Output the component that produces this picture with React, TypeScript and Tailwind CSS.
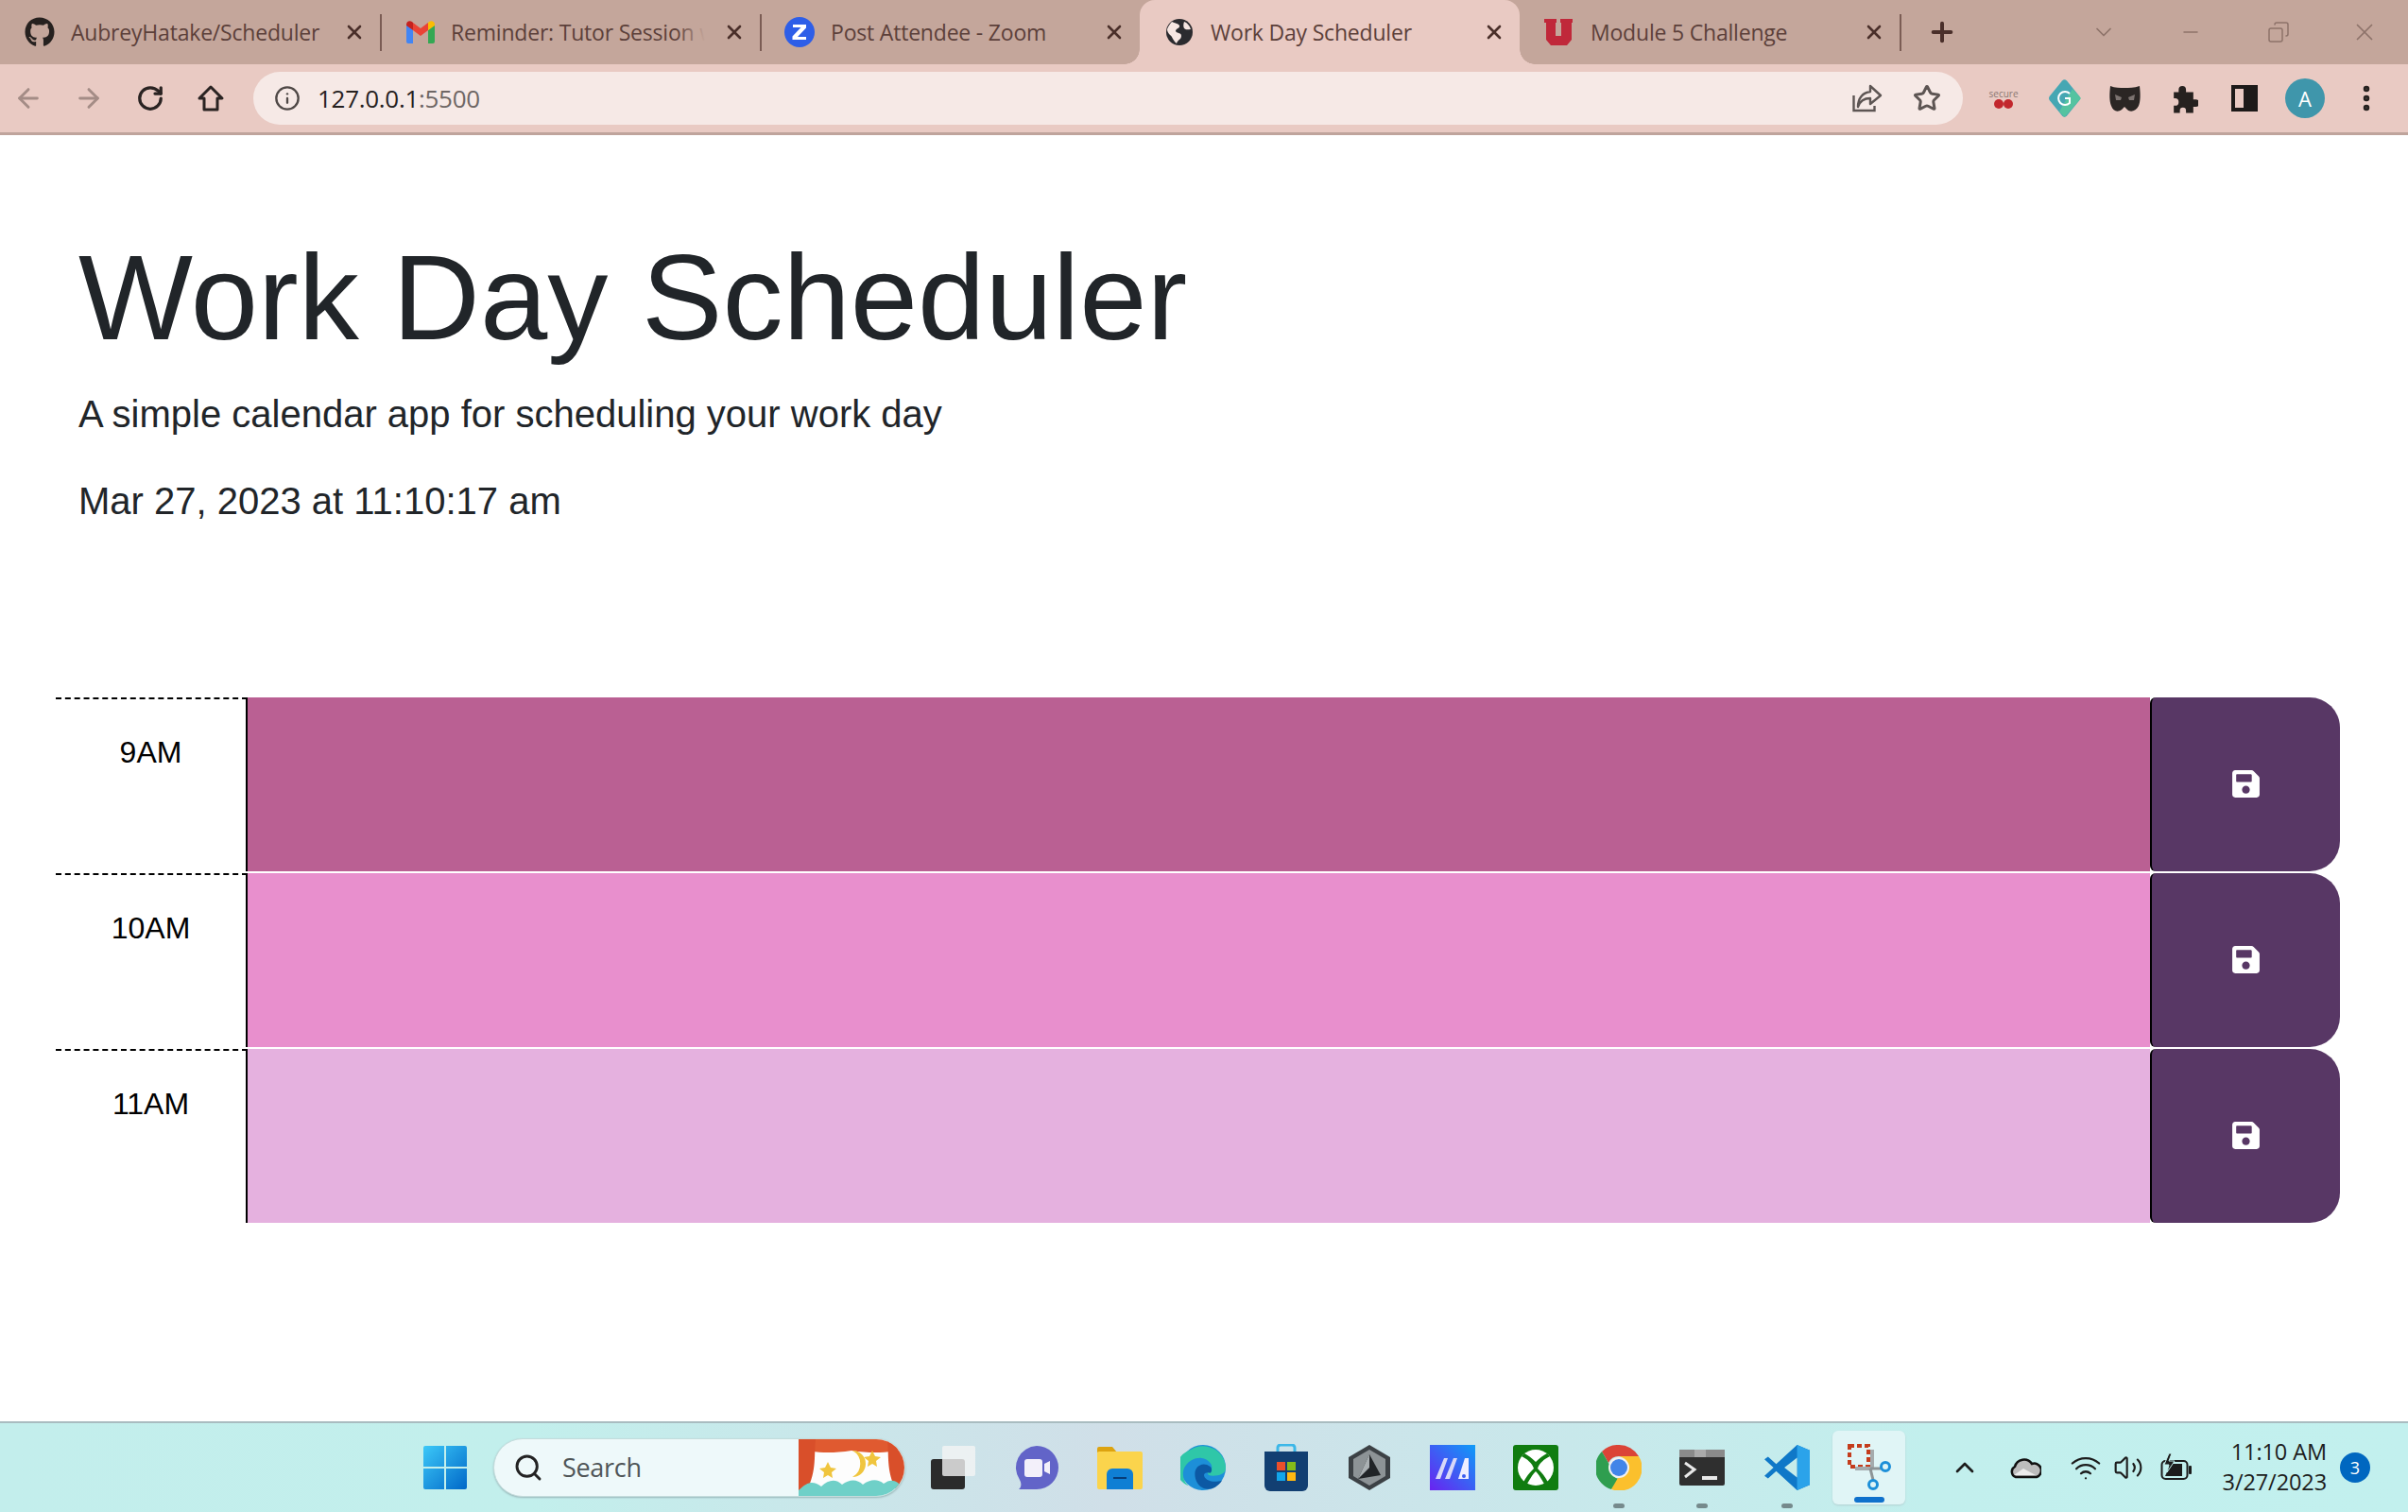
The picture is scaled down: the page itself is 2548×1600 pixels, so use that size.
import { FaGithub, FaSave } from 'react-icons/fa';
import { ArrowLeft, ArrowRight, ChevronDown, Copy, Info, MoreVertical, Plus, RotateCw, Search, Star, Volume2, Wifi, X, Minus, ChevronUp } from 'lucide-react';
import type { ReactNode } from 'react';

const sans = 'font-["Open_Sans","Noto_Sans",sans-serif]';

function GmailIcon() {
  return (
    <svg className="ml-[2px]" width="30" height="24" viewBox="0 0 30 24">
      <path d="M0 4v18a2 2 0 0 0 2 2h5V10z" fill="#4285f4" />
      <path d="M30 4v18a2 2 0 0 1-2 2h-5V10z" fill="#34a853" />
      <path d="M7 10 15 16l8-6V2l-8 6-8-6z" fill="#ea4335" />
      <path d="M0 4c0-3 3-5 6-3l1 1v8L0 5z" fill="#c5221f" />
      <path d="M30 4c0-3-3-5-6-3l-1 1v8l7-5z" fill="#fbbc04" />
    </svg>
  );
}

function ZoomIcon() {
  return (
    <svg width="32" height="32" viewBox="0 0 32 32">
      <circle cx="16" cy="16" r="16" fill="#2d5ee8" />
      <path d="M9 8h14v3.5L14 21h9v3H8.500v-3.500L17.500 11H9z" fill="#fff" />
    </svg>
  );
}

function GlobeIcon() {
  return (
    <svg width="30" height="30" viewBox="0 0 30 30">
      <circle cx="15" cy="15" r="14" fill="#2b2b2f" />
      <path d="M7 4c3 2 6 1 8 4 1 3-4 3-4 6 2 3 6 1 6 5s-4 4-5 8c-4-3-4-7-7-9-2-2-3-4-3-6 1-3 3-6 5-8zM20 4c3 1 6 4 7 8-3 0-5 1-7-1-1-2-1-4 0-7z" fill="#f6e6e2" />
    </svg>
  );
}

function UtahIcon() {
  return (
    <svg className="-ml-[2px]" width="30" height="28" viewBox="0 0 30 28">
      <path d="M0 0h13v4h-1v14h6V4h-1V0h13v4h-1v18l-5 6H7l-5-6V4H0z" fill="#c0283a" />
    </svg>
  );
}

function Tab({ icon, title, active, fade, divider = true }: { icon: ReactNode; title: string; active?: boolean; fade?: boolean; divider?: boolean }) {
  return (
    <div className={`relative flex h-[68px] w-[402px] items-center pl-[26px] ${active ? 'rounded-t-[16px] bg-[#e9cac3]' : ''}`}>
      {active && <span className="absolute bottom-0 left-[-16px] h-4 w-4 bg-[radial-gradient(circle_at_0_0,#c4a69b_15.500px,#e9cac3_16px)]" />}
      {active && <span className="absolute bottom-0 right-[-16px] h-4 w-4 bg-[radial-gradient(circle_at_100%_0,#c4a69b_15.500px,#e9cac3_16px)]" />}
      <span className="flex w-[32px] shrink-0 justify-center">{icon}</span>
      <span className="relative ml-[17px] w-[269px] overflow-hidden whitespace-nowrap text-[23px] leading-[30px] tracking-[-0.2px] text-[#5c403a]">
        {title}
        {fade && <span className="absolute inset-y-0 right-0 w-[30px] bg-gradient-to-r from-transparent to-[#c4a69b]" />}
      </span>
      <X className="absolute right-[15px] text-[#4a2f2a]" size={24} strokeWidth={2.6} />
      {divider && !active && <span className="absolute right-[-2px] top-[15px] h-[39px] w-[2px] bg-[#7b5c54]" />}
    </div>
  );
}

function ChromeBar() {
  return (
    <header className={`shrink-0 ${sans}`}>
      <div className="flex h-[68px] items-center bg-[#c4a69b]">
        <Tab icon={<FaGithub size={32} className="text-[#26211f]" />} title="AubreyHatake/Scheduler" />
        <Tab icon={<GmailIcon />} title="Reminder: Tutor Session with Aubrey" fade />
        <Tab icon={<ZoomIcon />} title="Post Attendee - Zoom" divider={false} />
        <Tab icon={<GlobeIcon />} title="Work Day Scheduler" active />
        <Tab icon={<UtahIcon />} title="Module 5 Challenge" />
        <Plus className="ml-[29px] text-[#4a2f2a]" size={32} strokeWidth={3} />
        <ChevronDown className="ml-[141px] text-[#8d736a]" size={28} strokeWidth={1.5} />
        <Minus className="ml-[66px] text-[#8d736a]" size={24} strokeWidth={1.5} />
        <Copy className="ml-[69px] -scale-x-100 text-[#8d736a]" size={24} strokeWidth={1.5} />
        <X className="ml-[64px] text-[#8d736a]" size={30} strokeWidth={1.4} />
      </div>
      <div className="flex h-[72px] items-center bg-[#e9cac3] pl-[14px]">
        <ArrowLeft className="text-[#a48c86]" size={32} strokeWidth={2.2} />
        <ArrowRight className="ml-[32px] text-[#a48c86]" size={32} strokeWidth={2.2} />
        <RotateCw className="ml-[34px] text-[#2a2322]" size={30} strokeWidth={2.6} />
        <svg className="ml-[34px]" width="30" height="30" viewBox="0 0 30 30">
          <path d="M15 3 27 15h-5v12H8V15H3z" fill="none" stroke="#2a2322" strokeWidth="3" strokeLinejoin="round" />
        </svg>
        <div className="ml-[30px] flex h-[56px] w-[1809px] items-center rounded-full bg-[#f6e9e6] pl-[22px]">
          <Info className="text-[#4f4846]" size={28} strokeWidth={2} />
          <span className="ml-[18px] text-[26px] tracking-[-0.3px] text-[#26211f]">
            127.0.0.1<span className="text-[#6e6664]">:5500</span>
          </span>
          <svg className="ml-auto" width="32" height="30" viewBox="0 0 32 30">
            <path d="M1.500 12v16h22v-5" fill="none" stroke="#5d5553" strokeWidth="2.400" />
            <path d="M19 2 30 12 19 21v-6c-7 0-11 3-13 9 0-9 5-15 13-16z" fill="none" stroke="#5d5553" strokeWidth="2.400" strokeLinejoin="round" />
          </svg>
          <Star className="ml-[32px] mr-[23px] text-[#5d5553]" size={30} strokeWidth={2.4} />
        </div>
        <div className="ml-[28px] flex w-[30px] flex-col items-center leading-none">
          <span className="text-[10px] text-[#8a7772]">secure</span>
          <span className="mt-[1px] flex">
            <span className="h-[10px] w-[10px] rounded-full bg-[#c2272d]" />
            <span className="h-[10px] w-[10px] rounded-full bg-[#c2272d]" />
          </span>
        </div>
        <svg className="ml-[32px]" width="35" height="40" viewBox="0 0 35 40">
          <path d="M15 1.500a3.500 3.500 0 0 1 5 0l13 16a4 4 0 0 1 0 5l-13 16a3.500 3.500 0 0 1-5 0L2 22.500a4 4 0 0 1 0-5z" fill="#46a7b3" />
          <path d="M17.500 40 35 20 26 10 12 34z" fill="#55c3a0" />
          <path d="M23 15a7 7 0 1 0 0 10v-5h-5" fill="none" stroke="#fff" strokeWidth="2" />
        </svg>
        <svg className="ml-[30px]" width="33" height="30" viewBox="0 0 33 30">
          <path d="M1 2c5 2 10 2 15 2s10 0 16-2c1 9 1 16-1 21-3 6-9 7-12 4l-3-3-3 3c-4 3-9 2-11-4C0 18 0 11 1 2z" fill="#2b2624" />
          <path d="M6 11l7 3-1 3H7zM27 11l-7 3 1 3h5z" fill="#7c7370" />
        </svg>
        <svg className="ml-[30px]" width="31" height="32" viewBox="0 0 24 24">
          <path d="M4 7h4V5a3 3 0 0 1 6 0v2h6v6h2a3 3 0 0 1 0 6h-2v5h-6v-2a2.500 2.500 0 0 0-5 0v2H4v-6h1a3 3 0 0 0 0-6H4z" fill="#26211f" />
        </svg>
        <span className="ml-[35px] flex h-[28px] w-[28px] justify-end border-[4px] border-[#1d1a19]">
          <span className="h-full w-[11px] bg-[#1d1a19]" />
        </span>
        <span className="ml-[29px] flex h-[42px] w-[42px] items-center justify-center rounded-full bg-[#3f96ab] text-[22px] text-white">A</span>
        <MoreVertical className="ml-[27px] text-[#26211f]" size={34} strokeWidth={2.6} />
      </div>
      <div className="h-[3px] bg-[#bfa49c]" />
    </header>
  );
}

function HourRow({ hour, color }: { hour: string; color: string }) {
  return (
    <div className="flex h-[184px]">
      <div className="h-full w-[203px] border-r-2 border-t-2 border-r-black border-t-black border-dashed [border-right-style:solid] pt-[32px] text-center text-[32px] leading-[48px] text-black">
        {hour}
      </div>
      <div className={`h-full flex-1 ${color}`} />
      <button className="flex h-full w-[201px] items-center justify-center rounded-l-[6px] rounded-r-[32px] border-l-2 border-black bg-[#583765] text-white">
        <FaSave size={33} className="-mt-[2px]" />
      </button>
    </div>
  );
}

function TaskIcon({ children, dot, className = '' }: { children: ReactNode; dot?: boolean; className?: string }) {
  return (
    <div className={`relative flex h-[50px] w-[48px] items-center justify-center ${className}`}>
      {children}
      {dot && <span className="absolute bottom-[-18px] h-[5px] w-[12px] rounded-full bg-[#768a8c]" />}
    </div>
  );
}

function Taskbar() {
  return (
    <footer className={`flex h-[96px] shrink-0 items-center border-t-2 border-[#a9bcc0] bg-[linear-gradient(90deg,#c3eeec_0%,#c2efec_22%,#d0dfe8_46%,#c2efed_80%,#c2f0ee_100%)] pl-[448px] ${sans}`}>
      <svg width="46" height="46" viewBox="0 0 46 46">
        <defs>
          <linearGradient id="win" x1="0" y1="0" x2="1" y2="1">
            <stop offset="0" stopColor="#3cc8f8" />
            <stop offset="1" stopColor="#0068c8" />
          </linearGradient>
        </defs>
        <path d="M0 2a2 2 0 0 1 2-2h20v22H0zM24 0h20a2 2 0 0 1 2 2v20H24zM0 24h22v22H2a2 2 0 0 1-2-2zM24 24h22v20a2 2 0 0 1-2 2H24z" fill="url(#win)" />
      </svg>
      <div className="relative ml-[28px] flex h-[62px] w-[436px] items-center overflow-hidden rounded-full border border-[#c4dcdc] bg-[#eef9fa] pl-[20px] shadow-[0_1px_2px_#9ab8ba]">
        <Search className="text-[#232323]" size={32} strokeWidth={2.2} />
        <span className="ml-[20px] text-[27px] tracking-[-0.3px] text-[#4f5557]">Search</span>
        <svg className="absolute right-0 top-0" width="112" height="62" viewBox="0 0 112 62">
          <rect width="112" height="62" fill="#fdfdfd" />
          <path d="M0 0h112v8c-10 6-30 8-56 4C30 16 12 14 0 8z" fill="#e05a30" />
          <path d="M0 0h18c-2 20 2 34-12 60H0zM112 0H94c2 20-2 34 12 60h6z" fill="#d94f2a" />
          <path d="M0 54c10-10 16-10 24-4 8-8 16-8 22-2 8-6 16-6 22 0 8-6 16-6 22-1 8-6 14-4 22 6v9H0z" fill="#6fd0c8" />
          <path d="M57 12a14 14 0 1 1 0 28 16 16 0 0 0 0-28z" fill="#f0c53e" />
          <path d="M31 24l3 6 6 1-5 4 1 6-5-3-5 3 1-6-5-4 6-1zM78 12l3 6 6 1-5 4 1 6-5-3-5 3 1-6-5-4 6-1z" fill="#f0c53e" />
        </svg>
      </div>
      <div className="relative ml-[27px] h-[46px] w-[47px]">
        <span className="absolute bottom-0 left-0 h-[32px] w-[36px] rounded-[3px] bg-[#2b2b2b]" />
        <span className="absolute right-0 top-0 h-[32px] w-[35px] rounded-[2px] bg-[#f4f4f4]/80" />
      </div>
      <TaskIcon className="ml-[41px]">
        <svg width="46" height="46" viewBox="0 0 46 46">
          <path d="M23 0a23 23 0 0 1 0 46H4c3-3 3-6 1-10A23 23 0 0 1 23 0z" fill="#6264c8" />
          <rect x="10" y="14" width="19" height="19" rx="3" fill="#f3f0fa" />
          <path d="M31 19l6-3v14l-6-3z" fill="#f3f0fa" />
        </svg>
      </TaskIcon>
      <TaskIcon className="ml-[40px]">
        <svg width="48" height="46" viewBox="0 0 48 46">
          <path d="M0 3a2 2 0 0 1 2-2h14l5 6H0z" fill="#dda310" />
          <rect y="6" width="48" height="40" rx="2" fill="#fbd44c" />
          <path d="M10 46V30a6 6 0 0 1 6-6h16a6 6 0 0 1 6 6v16z" fill="#0f7fd4" />
          <rect x="17" y="33" width="14" height="2" fill="#073d78" />
        </svg>
      </TaskIcon>
      <TaskIcon className="ml-[40px]">
        <svg width="50" height="50" viewBox="0 0 50 50">
          <circle cx="25" cy="25" r="25" fill="#1d8fd8" />
          <path d="M12 5a25 25 0 0 1 38 20c0 7-7 9-14 9-4 0-6-1-6-3 5-2 6-7 3-11-6-8-20-8-28 4-4 7-2 16 4 21-9-4-13-10-13-20C-4 14 4 8 12 5z" fill="#2fc7a8" />
          <path d="M16 32c0-9 9-14 17-8 2 2 2 5 0 7-2-1-6-1-7 2 0 5 9 10 20 6-5 8-13 11-20 9-6-2-10-9-10-16z" fill="#0c59a4" />
        </svg>
      </TaskIcon>
      <TaskIcon className="ml-[40px]">
        <svg width="46" height="50" viewBox="0 0 46 50">
          <path d="M10 10h4V4a3 3 0 0 1 3-3h12a3 3 0 0 1 3 3v6h4" fill="none" stroke="#3cb7e8" strokeWidth="3" />
          <path d="M0 8h46v36a6 6 0 0 1-6 6H6a6 6 0 0 1-6-6z" fill="#123f72" />
          <rect x="13" y="19" width="9" height="9" fill="#ea4f2b" />
          <rect x="24" y="19" width="9" height="9" fill="#85bb1a" />
          <rect x="13" y="30" width="9" height="9" fill="#12a5ea" />
          <rect x="24" y="30" width="9" height="9" fill="#fdb812" />
        </svg>
      </TaskIcon>
      <TaskIcon className="ml-[40px]">
        <svg width="44" height="48" viewBox="0 0 44 48">
          <path d="M22 0 44 13v22L22 48 0 35V13z" fill="#3c4145" />
          <path d="M22 5 39 15v18L22 43 5 33V15z" fill="#8d9396" />
          <path d="M22 10 34 32 10 36z" fill="#212427" />
          <path d="M10 36 22 24v-14z" fill="#aab0b3" />
        </svg>
      </TaskIcon>
      <TaskIcon className="ml-[40px]">
        <svg width="48" height="48" viewBox="0 0 48 48">
          <defs>
            <linearGradient id="mm" x1="1" y1="0" x2="0" y2="1">
              <stop offset="0" stopColor="#0f9cf8" />
              <stop offset="1" stopColor="#6a22f0" />
            </linearGradient>
          </defs>
          <rect width="48" height="48" fill="url(#mm)" />
          <path d="M6 36 15 14h4l-8 22zM16 36 25 14h4l-8 22z" fill="#d8d8f8" />
          <path d="M30 36 37 14h4v22z" fill="#eef" />
          <circle cx="36" cy="33" r="2" fill="#3a5cf0" />
        </svg>
      </TaskIcon>
      <TaskIcon className="ml-[40px]">
        <svg width="48" height="48" viewBox="0 0 48 48">
          <rect width="48" height="48" rx="3" fill="#107c10" />
          <circle cx="24" cy="24" r="19" fill="#fff" />
          <path d="M24 18c-4-4-8-7-12-9l-3 3c6 3 11 7 13 13-6 6-11 12-12 19l3 1c4-8 8-14 11-17 3 3 7 9 11 17l3-1c-1-7-6-13-12-19 2-6 7-10 13-13l-3-3c-4 2-8 5-12 9z" fill="#107c10" />
        </svg>
      </TaskIcon>
      <TaskIcon className="ml-[40px]" dot>
        <svg width="48" height="48" viewBox="0 0 48 48">
          <path d="M24 0a24 24 0 0 1 21 12H24a12 12 0 0 0-11 7L6 7A24 24 0 0 1 24 0z" fill="#db4437" />
          <path d="M6 7l11 19a8 8 0 0 0 7 10l-8 11A24 24 0 0 1 6 7z" fill="#2f9e4f" />
          <path d="M45 12a24 24 0 0 1-29 35l11-19c3-2 5-4 5-7 0-4-3-8-8-9z" fill="#fbc02d" />
          <circle cx="24" cy="24" r="11" fill="#f2f2f2" />
          <circle cx="24" cy="24" r="9" fill="#4285e8" />
        </svg>
      </TaskIcon>
      <TaskIcon className="ml-[40px]" dot>
        <svg width="48" height="38" viewBox="0 0 48 38">
          <rect width="48" height="38" rx="2" fill="#2f2f2f" />
          <rect y="0" width="48" height="8" fill="#8a8a8a" />
          <rect x="16" y="0" width="12" height="8" fill="#aaa" />
          <path d="M6 14 16 21 6 29" fill="none" stroke="#e8e8e8" strokeWidth="3" />
          <rect x="24" y="28" width="16" height="4" fill="#e8e8e8" />
        </svg>
      </TaskIcon>
      <TaskIcon className="ml-[42px]" dot>
        <svg width="50" height="50" viewBox="0 0 50 50">
          <path d="M36 0 50 6v38l-14 6-23-21-9 8-4-3 10-9L0 16l4-3 9 8z" fill="#0f78c8" />
          <path d="M36 0v50L50 44V6z" fill="#2ba3ea" />
          <path d="M36 14 22 25l14 11z" fill="#c7ecea" />
        </svg>
      </TaskIcon>
      <div className="relative ml-[24px] flex h-[78px] w-[77px] items-center justify-center rounded-[6px] bg-[#e0f5f6] shadow-[0_1px_2px_#b4d0d2]">
        <svg width="46" height="50" viewBox="0 0 46 50">
          <rect x="2" y="2" width="20" height="22" fill="none" stroke="#c43c1c" strokeWidth="4" strokeDasharray="5 3" />
          <path d="M8 26h16a2 2 0 0 0 2-2V6" fill="none" stroke="#a5abad" strokeWidth="4" />
          <path d="M24 26 35 26M24 26 27 38" fill="none" stroke="#8d9496" strokeWidth="3" />
          <circle cx="40" cy="24" r="4.500" fill="none" stroke="#1c8fd8" strokeWidth="3" />
          <circle cx="27" cy="43" r="4.500" fill="none" stroke="#1c8fd8" strokeWidth="3" />
        </svg>
        <span className="absolute bottom-[2px] h-[6px] w-[32px] rounded-full bg-[#0f71cc]" />
      </div>
      <ChevronUp className="ml-[47px] text-[#1c1c1c]" size={32} strokeWidth={2} />
      <svg className="ml-[31px]" width="34" height="24" viewBox="0 0 34 24">
        <path d="M7 22a6 6 0 0 1-1-11 10 10 0 0 1 18-3 7 7 0 0 1 5 14z" fill="#bcbcbc" stroke="#111" strokeWidth="2.500" />
        <path d="M5 20l10-7 13 7z" fill="#ececec" />
      </svg>
      <Wifi className="ml-[30px] text-[#1c1c1c]" size={34} strokeWidth={1.6} />
      <Volume2 className="ml-[12px] text-[#1c1c1c]" size={32} strokeWidth={1.6} />
      <svg className="ml-[18px]" width="34" height="30" viewBox="0 0 34 30">
        <rect x="1.500" y="8" width="27" height="19" rx="4" fill="none" stroke="#1c1c1c" strokeWidth="2" />
        <rect x="30" y="13" width="3" height="9" rx="1" fill="#1c1c1c" />
        <path d="M5 24 11 11h12v13z" fill="#1c1c1c" />
        <path d="M9 0 4 12h5l-2 8 8-12H9l3-8z" fill="#1c1c1c" stroke="#c2efec" strokeWidth="1" />
      </svg>
      <div className="ml-[18px] w-[124px] text-right text-[23.500px] leading-[32px] text-[#1c1c1c]">
        <div className="-mt-[2px] tracking-[-0.1px]">11:10 AM</div>
        <div className="tracking-[-0.1px]">3/27/2023</div>
      </div>
      <span className="ml-[14px] flex h-[32px] w-[32px] items-center justify-center rounded-full bg-[#0067c0] text-[18px] text-white">3</span>
    </footer>
  );
}

export default function App() {
  return (
    <div className="flex h-[1600px] w-[2548px] flex-col overflow-hidden bg-white font-['Liberation_Sans',Arial,sans-serif]">
      <ChromeBar />
      <main className="flex-1">
        <div className="pl-[83px] pt-[95px] text-[#212529]">
          <h1 className="text-[128.200px] leading-[154px]">Work Day Scheduler</h1>
          <p className="mt-[16px] text-[40px] leading-[60px]">A simple calendar app for scheduling your work day</p>
          <p className="mt-[32px] text-[40px] leading-[60px]">Mar 27, 2023 at 11:10:17 am</p>
        </div>
        <div className="ml-[59px] mt-[178px] flex w-[2417px] flex-col gap-[2px]">
          <HourRow hour="9AM" color="bg-[#ba6093]" />
          <HourRow hour="10AM" color="bg-[#e88fcd]" />
          <HourRow hour="11AM" color="bg-[#e5b1df]" />
        </div>
      </main>
      <Taskbar />
    </div>
  );
}
